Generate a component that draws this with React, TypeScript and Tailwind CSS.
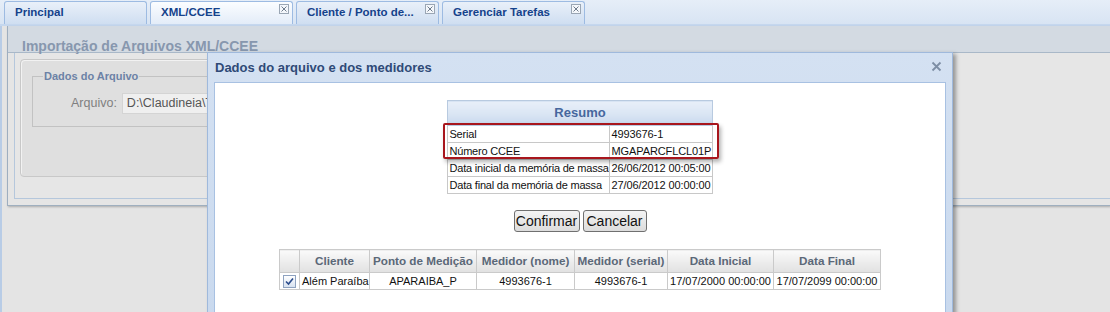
import React from "react";

function TabClose() {
  return (
    <span className="absolute right-[3px] top-[2px] w-[10px] h-[10px] border border-[#9aa6b4] bg-[#f4f7fb] flex items-center justify-center">
      <svg width="8" height="8" viewBox="0 0 8 8">
        <path d="M1.5 1.5 L6.5 6.5 M6.5 1.5 L1.5 6.5" stroke="#6f7c8c" strokeWidth="1" />
      </svg>
    </span>
  );
}

function Tab({ label, active, closable }: { label: string; active?: boolean; closable?: boolean }) {
  return (
    <div
      className={
        "relative w-[143px] h-[23px] rounded-t-[3px] border border-b-0 border-[#9dbbe2] pl-[10px] flex items-center text-[11.5px] font-bold text-[#15428b] " +
        (active
          ? "bg-gradient-to-b from-[#fbfdff] to-[#e3ecf8]"
          : "bg-gradient-to-b from-[#e9f0f9] to-[#cfdef1]")
      }
    >
      <span className="whitespace-nowrap">{label}</span>
      {closable && <TabClose />}
    </div>
  );
}

const resumo: [string, string][] = [
  ["Serial", "4993676-1"],
  ["Número CCEE", "MGAPARCFLCL01P"],
  ["Data inicial da memória de massa", "26/06/2012 00:05:00"],
  ["Data final da memória de massa", "27/06/2012 00:00:00"],
];

const heads = ["Cliente", "Ponto de Medição", "Medidor (nome)", "Medidor (serial)", "Data Inicial", "Data Final"];
const widths = [70, 107, 98, 93, 106, 107];

export default function App() {
  return (
    <div className="relative w-[1110px] h-[312px] overflow-hidden bg-[#e4e4e4] font-['Liberation_Sans',Arial,sans-serif] flex flex-col">
      {/* tab strip */}
      <div className="h-[26px] shrink-0 flex items-end gap-[3px] pl-[4px] bg-gradient-to-b from-[#e6eef8] to-[#d8e4f3] border-b-2 border-[#c5d7ee]">
        <Tab label="Principal" />
        <Tab label="XML/CCEE" active closable />
        <Tab label="Cliente / Ponto de..." closable />
        <Tab label="Gerenciar Tarefas" closable />
      </div>

      {/* main area */}
      <div className="flex-1 flex border-l-2 border-[#b8cce6]">
        <div className="pl-[5px] w-full">
          <div className="border-l border-[#9eaec0] shadow-[1px_1px_2px_rgba(0,0,0,0.25)]">
            <div className="h-[27px] bg-[#d3dae2] border-b border-[#a9b8c8] pl-[14px] pt-[8px]">
              <span className="text-[14px] leading-[16px] font-bold text-[#8797ae] whitespace-nowrap">
                Importação de Arquivos XML/CCEE
              </span>
            </div>
            <div className="pl-[6px] pb-[6px] bg-[#e5e5e5] border-b border-[#9fafbf]">
              <div className="h-[146px] border-l border-b border-[#b5c7dc] bg-[#e6e6e6] pl-[5px] pt-[6px]">
                <div className="w-[870px] h-[118px] rounded-[4px] border border-[#c8c8c8] bg-[#dfdfdf] shadow-[inset_1px_1px_0_#f2f2f2]">
                  <fieldset className="mt-[9px] ml-[11px] w-[850px] h-[58px] border border-[#c2c2c2] px-[10px]">
                    <legend className="px-[1px] text-[11px] leading-[14px] font-bold text-[#6c82a6]">Dados do Arquivo</legend>
                    <div className="flex items-center pl-[28px] mt-[10px] gap-[5px]">
                      <span className="text-[12.5px] text-[#808080]">Arquivo:</span>
                      <div className="w-[400px] h-[21px] bg-[#efefef] border border-[#d4d4d4] pl-[4px] flex items-center text-[12.5px] text-[#555]">
                        D:\Claudineia\Testes\arquivo.xml
                      </div>
                    </div>
                  </fieldset>
                </div>
              </div>
            </div>
          </div>
        </div>
      </div>

      {/* modal */}
      <div className="absolute left-[207px] top-[52px] w-[746px] h-[280px] border border-[#9fb9dc] bg-gradient-to-b from-[#d4e1f2] to-[#c9d9ee] shadow-[3px_2px_4px_rgba(0,0,0,0.35)]">
        <div className="relative h-[29px] pl-[7px] flex items-center">
          <span className="text-[13px] font-bold text-[#2f4a77] whitespace-nowrap">Dados do arquivo e dos medidores</span>
          <svg className="absolute right-[10px] top-[8px]" width="11" height="11" viewBox="0 0 11 11">
            <path d="M1.5 1.5 L9.5 9.5 M9.5 1.5 L1.5 9.5" stroke="#7d8ea5" strokeWidth="1.8" />
          </svg>
        </div>
        <div className="mx-[6px] h-[250px] bg-white border border-[#a8c1e2] pt-[17px] flex flex-col items-center">
          {/* Resumo table */}
          <div className="relative">
            <table className="border-collapse table-fixed w-[264px] text-[11px] text-[#111]">
              <colgroup>
                <col style={{ width: 162 }} />
                <col style={{ width: 102 }} />
              </colgroup>
              <thead>
                <tr>
                  <th
                    colSpan={2}
                    className="h-[25px] border border-[#b8cae0] bg-gradient-to-b from-[#e8eff9] via-[#dbe6f4] to-[#c8d8ed] text-[13px] font-bold text-[#46679e]"
                  >
                    Resumo
                  </th>
                </tr>
              </thead>
              <tbody>
                {resumo.map(([k, v]) => (
                  <tr key={k} className="h-[17px]">
                    <td className="border border-[#c8c8c8] pl-[1px] leading-[15px] whitespace-nowrap overflow-hidden tracking-[-0.2px]">{k}</td>
                    <td className="border border-[#c8c8c8] pl-[1px] leading-[15px] whitespace-nowrap overflow-hidden tracking-[-0.1px]">{v}</td>
                  </tr>
                ))}
              </tbody>
            </table>
            <div className="absolute left-[-4px] top-[23px] w-[276px] h-[36px] border-2 border-[#a8161d] rounded-[2px] shadow-[2px_3px_4px_rgba(0,0,0,0.3)]" />
          </div>

          {/* buttons */}
          <div className="mt-[16px] flex gap-[3px]">
            <button className="w-[66px] h-[22px] rounded-[3px] border border-[#707070] bg-gradient-to-b from-[#f4f4f4] to-[#dcdcdc] text-[14px] text-[#111] leading-[18px]">
              Confirmar
            </button>
            <button className="w-[64px] h-[22px] rounded-[3px] border border-[#707070] bg-gradient-to-b from-[#f4f4f4] to-[#dcdcdc] text-[14px] text-[#111] leading-[18px]">
              Cancelar
            </button>
          </div>

          {/* medidores table */}
          <table className="mt-[17px] border-collapse table-fixed w-[601px] text-[11px] text-[#111]">
            <colgroup>
              <col style={{ width: 20 }} />
              {widths.map((w, i) => (
                <col key={i} style={{ width: w }} />
              ))}
            </colgroup>
            <thead>
              <tr className="h-[23px]">
                <th className="border border-[#cacaca] bg-gradient-to-b from-[#fafafa] to-[#e1e1e1]" />
                {heads.map((h) => (
                  <th
                    key={h}
                    className="border border-[#cacaca] bg-gradient-to-b from-[#fafafa] to-[#e1e1e1] text-[11.7px] font-bold text-[#5b6878] whitespace-nowrap"
                  >
                    {h}
                  </th>
                ))}
              </tr>
            </thead>
            <tbody>
              <tr className="h-[17px]">
                <td className="border border-[#cacaca]">
                  <div className="ml-[3px] w-[13px] h-[13px] border border-[#8ea2c0] bg-gradient-to-b from-[#ffffff] to-[#d8e2f0] flex items-center justify-center">
                    <svg width="9" height="9" viewBox="0 0 9 9">
                      <path d="M1 4.5 L3.5 7 L8 1.5" fill="none" stroke="#2b4c8c" strokeWidth="1.6" />
                    </svg>
                  </div>
                </td>
                <td className="border border-[#cacaca] pl-[2px] whitespace-nowrap leading-[15px]">Além Paraíba</td>
                <td className="border border-[#cacaca] text-center leading-[15px]">APARAIBA_P</td>
                <td className="border border-[#cacaca] text-center leading-[15px]">4993676-1</td>
                <td className="border border-[#cacaca] text-center leading-[15px]">4993676-1</td>
                <td className="border border-[#cacaca] text-center whitespace-nowrap leading-[15px]">17/07/2000 00:00:00</td>
                <td className="border border-[#cacaca] text-center whitespace-nowrap leading-[15px]">17/07/2099 00:00:00</td>
              </tr>
            </tbody>
          </table>
        </div>
      </div>
    </div>
  );
}
